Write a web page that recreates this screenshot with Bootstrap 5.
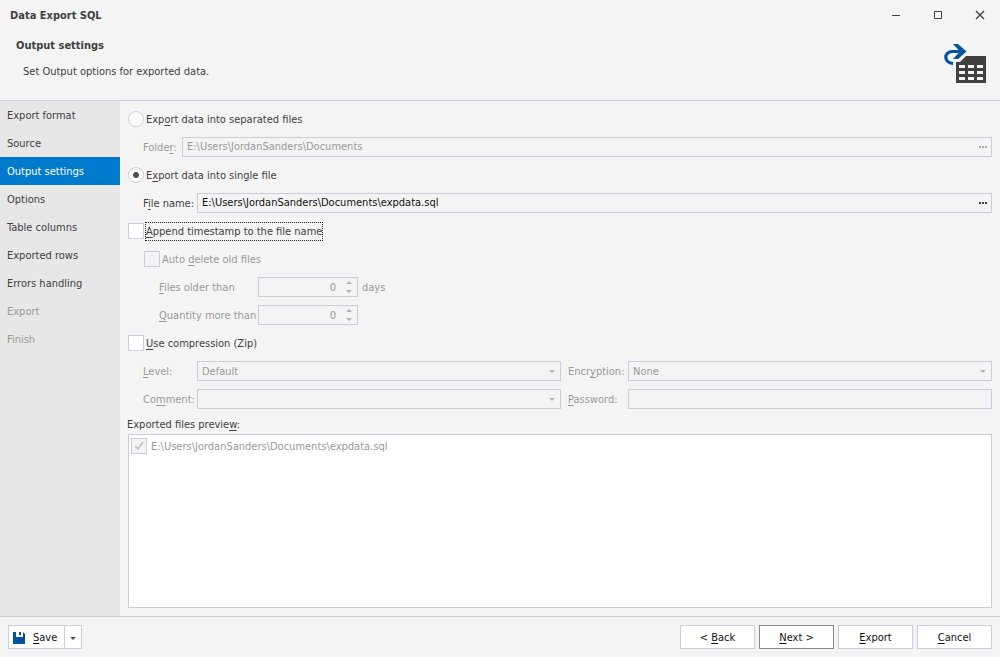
<!DOCTYPE html>
<html lang="en">
<head>
<meta charset="utf-8">
<meta name="viewport" content="width=device-width, initial-scale=1">
<title>Data Export SQL</title>
<link href="https://cdn.jsdelivr.net/npm/bootstrap@5.3.0/dist/css/bootstrap.min.css" rel="stylesheet">
<style>
  :root { --line: #cccce0; --ink: #404040; --dim: #999; --accent: #007acc; --face: #f4f4f4; }
  body {
    font: 11px/16px "DejaVu Sans Condensed", Tahoma, sans-serif;
    color: var(--ink); background: var(--face);
  }
  u { text-decoration-skip-ink: none; text-underline-offset: 2px; text-decoration-thickness: 1px; }
  h1, h2 { font-size: 11px; line-height: 16px; font-weight: 700; margin: 0; }
  h1, label, .unit { padding-top: 2px; }
  p { margin: 0; }

  .titlebar { height: 30px; padding-left: 10px; }
  .win-btn { width: 42px; height: 30px; border: 0; background: none; padding: 0; color: var(--ink); }
  .win-btn svg { display: block; margin: auto; }
  .heading { height: 70px; padding: 8px 14px 0 16px; }
  .heading p { padding: 10px 0 0 7px; }
  .line-bottom { border-bottom: 1px solid var(--line); box-sizing: content-box; }

  .steps { width: 120px; background: #e7e7e7; }
  .steps a { height: 28px; padding: 0 7px; line-height: 30px; color: var(--ink); border-radius: 0; }
  .steps a.active { background: var(--accent); color: #fff; }
  .steps a.disabled { color: var(--dim); }

  .settings { padding: 4px 8px 8px; }
  .line-row { min-height: 28px; }
  .indent-1 { padding-left: 15px; }
  .indent-tick { padding-left: 16px; }
  .indent-2 { padding-left: 31px; }
  .off { color: var(--dim); }
  .cap-s { width: 39px; }
  .cap-m { width: 54px; }
  .cap-l { width: 99px; }
  .pair { display: grid; grid-template-columns: 54px 1fr 67px 1fr; }
  .cap-e { padding-left: 7px; }

  .tick {
    appearance: none; flex: none; width: 16px; height: 16px; margin: 0;
    border: 1px solid var(--line); background: #fff center no-repeat;
  }
  .tick[type=radio] { border-radius: 50%; }
  .tick[type=radio]:checked { background-image: radial-gradient(circle, #505050 2.5px, transparent 3.5px); }
  .tick:disabled { background-color: var(--face); }
  .tick[type=checkbox]:checked {
    background-image: url("data:image/svg+xml,%3Csvg xmlns='http://www.w3.org/2000/svg' width='14' height='14'%3E%3Cpath d='M3 7l3 3 5-7' fill='none' stroke='%23bbb' stroke-width='1.3'/%3E%3C/svg%3E");
  }
  .tick-text { margin-left: 2px; }
  .focus-box { outline: 1px dotted #222; padding: 1px 0 0; }

  .field {
    height: 20px; min-width: 0; width: 100%; border: 1px solid var(--line); border-radius: 0;
    background: var(--face); color: #111; padding: 0 4px; font: inherit; outline: 0;
  }
  .field:disabled, .field.off { color: var(--dim); opacity: 1; }
  select.field, input.field, .field input { padding-top: 1px; }
  .field input { border: 0; background: none; padding-left: 0; color: inherit; min-width: 0; outline: 0; }
  .more { width: 17px; border: 0; background: none; padding: 0 0 0 5px; margin-right: -4px; line-height: 0; color: #404040; text-align: left; }
  .off .more { color: #aaa; }
  .more svg { display: block; }
  select.field {
    appearance: none; background: var(--face) right 5px center no-repeat
    url("data:image/svg+xml,%3Csvg xmlns='http://www.w3.org/2000/svg' width='6' height='3'%3E%3Cpath d='M0 0h6L3 3z' fill='%23b4b4b4'/%3E%3C/svg%3E");
  }
  input.spin {
    width: 100px; padding-right: 21px; text-align: right; appearance: textfield;
    background: var(--face) right 5px center no-repeat
    url("data:image/svg+xml,%3Csvg xmlns='http://www.w3.org/2000/svg' width='6' height='12'%3E%3Cpath d='M0 3h6L3 0zM0 9h6L3 12z' fill='%23b4b4b4'/%3E%3C/svg%3E");
  }
  .spin::-webkit-inner-spin-button { appearance: none; margin: 0; }
  .preview-cap { height: 21px; line-height: 23px; margin-left: -1px; }
  .preview { border: 1px solid var(--line); background: #fff; padding: 2px; }

  .actions { border-top: 1px solid var(--line); padding: 8px; }
  .actions .btn {
    --bs-btn-font-size: 11px; --bs-btn-line-height: 16px; --bs-btn-padding-y: 3px; --bs-btn-padding-x: 0;
    --bs-btn-border-radius: 0; --bs-btn-border-color: var(--line); --bs-btn-bg: #fff; --bs-btn-color: #111;
    width: 75px; height: 24px; padding-top: 4px; padding-bottom: 2px;
  }
  .actions .btn.main-btn { border-color: #888; }
  .actions .save-btn { width: 57px; padding-left: 4px; padding-right: 4px; }
  .actions .save-menu { width: 18px; }
</style>
</head>
<body class="d-flex flex-column min-vh-100">
  <header class="line-bottom">
    <div class="titlebar d-flex align-items-center">
      <h1 class="me-auto">Data Export SQL</h1>
      <button class="win-btn" type="button" aria-label="Minimize"><svg width="12" height="10"><path d="M3 5.500h8" stroke="currentColor"/></svg></button>
      <button class="win-btn" type="button" aria-label="Maximize"><svg width="12" height="10"><path d="M3.500 1.500h7v7h-7z" fill="none" stroke="currentColor"/></svg></button>
      <button class="win-btn" type="button" aria-label="Close"><svg width="12" height="10"><path d="M3 1l8 8M11 1l-8 8" stroke="currentColor" stroke-width="1.400"/></svg></button>
    </div>
    <div class="heading d-flex justify-content-between">
      <div>
        <h2>Output settings</h2>
        <p>Set Output options for exported data.</p>
      </div>
      <svg width="42" height="46" viewBox="0 -6 42 46" aria-hidden="true">
        <path fill="#00539c" d="M9 0h5l8.500 7.500L14 15H9l7-7.500z"/>
        <path fill="none" stroke="#00539c" stroke-width="3.200" d="M18 7.500H8.500c-9 0-9 11.500 .5 12"/>
        <path fill="#404040" fill-rule="evenodd" d="M22 12h20v27H12V18h4zM15 21v3h6v-3zM24 21v3h6v-3zM33 21v3h6v-3zM15 27v3h6v-3zM24 27v3h6v-3zM33 27v3h6v-3zM15 33v3h6v-3zM24 33v3h6v-3zM33 33v3h6v-3z"/>
      </svg>
    </div>
  </header>

  <div class="d-flex flex-grow-1">
    <nav class="steps nav flex-column flex-nowrap flex-shrink-0" aria-label="Steps">
      <a class="nav-link" href="#">Export format</a>
      <a class="nav-link" href="#">Source</a>
      <a class="nav-link active" href="#" aria-current="step">Output settings</a>
      <a class="nav-link" href="#">Options</a>
      <a class="nav-link" href="#">Table columns</a>
      <a class="nav-link" href="#">Exported rows</a>
      <a class="nav-link" href="#">Errors handling</a>
      <a class="nav-link disabled" href="#" aria-disabled="true">Export</a>
      <a class="nav-link disabled" href="#" aria-disabled="true">Finish</a>
    </nav>

    <main class="settings d-flex flex-column flex-grow-1">
      <div class="line-row d-flex align-items-center">
        <input class="tick" type="radio" name="target" id="separate">
        <label class="tick-text" for="separate">Exp<u>o</u>rt data into separated files</label>
      </div>
      <div class="line-row d-flex align-items-center indent-1 off">
        <label class="cap-s flex-shrink-0" for="folder">Folde<u>r</u>:</label>
        <div class="field off d-flex align-items-center">
          <input class="flex-grow-1" id="folder" type="text" value="E:\Users\JordanSanders\Documents" disabled>
          <button class="more" type="button" aria-label="Browse folder" disabled><svg width="8" height="2"><path d="M0 1h2M3 1h2M6 1h2" stroke="currentColor" stroke-width="2"/></svg></button>
        </div>
      </div>
      <div class="line-row d-flex align-items-center">
        <input class="tick" type="radio" name="target" id="single" checked>
        <label class="tick-text" for="single">E<u>x</u>port data into single file</label>
      </div>
      <div class="line-row d-flex align-items-center indent-1">
        <label class="cap-m flex-shrink-0" for="file">F<u>i</u>le name:</label>
        <div class="field d-flex align-items-center">
          <input class="flex-grow-1" id="file" type="text" value="E:\Users\JordanSanders\Documents\expdata.sql">
          <button class="more" type="button" aria-label="Browse file"><svg width="8" height="2"><path d="M0 1h2M3 1h2M6 1h2" stroke="currentColor" stroke-width="2"/></svg></button>
        </div>
      </div>
      <div class="line-row d-flex align-items-center">
        <input class="tick" type="checkbox" id="stamp">
        <label class="tick-text focus-box" for="stamp"><u>A</u>ppend timestamp to the file name</label>
      </div>
      <div class="line-row d-flex align-items-center indent-tick off">
        <input class="tick" type="checkbox" id="autodel" disabled>
        <label class="tick-text" for="autodel">Auto <u>d</u>elete old files</label>
      </div>
      <div class="line-row d-flex align-items-center indent-2 off">
        <label class="cap-l" for="older"><u>F</u>iles older than</label>
        <input class="field spin" type="number" id="older" value="0" disabled>
        <span class="unit ms-1">days</span>
      </div>
      <div class="line-row d-flex align-items-center indent-2 off">
        <label class="cap-l text-nowrap" for="quantity"><u>Q</u>uantity more than</label>
        <input class="field spin" type="number" id="quantity" value="0" disabled>
      </div>
      <div class="line-row d-flex align-items-center">
        <input class="tick" type="checkbox" id="zip">
        <label class="tick-text" for="zip"><u>U</u>se compression (Zip)</label>
      </div>
      <div class="line-row pair align-items-center indent-1 off">
        <label for="level"><u>L</u>evel:</label>
        <select class="field" id="level" disabled><option>Default</option></select>
        <label class="cap-e" for="encryption">Encr<u>y</u>ption:</label>
        <select class="field" id="encryption" disabled><option>None</option></select>
      </div>
      <div class="line-row pair align-items-center indent-1 off">
        <label for="comment">Co<u>m</u>ment:</label>
        <select class="field" id="comment" disabled><option></option></select>
        <label class="cap-e" for="password"><u>P</u>assword:</label>
        <input class="field" type="password" id="password" disabled>
      </div>
      <div class="preview-cap" id="preview-cap">Exported files previe<u>w</u>:</div>
      <div class="preview flex-grow-1" role="group" aria-labelledby="preview-cap">
        <div class="d-flex align-items-center off">
          <input class="tick" type="checkbox" id="out1" checked disabled>
          <label class="ms-1" for="out1">E:\Users\JordanSanders\Documents\expdata.sql</label>
        </div>
      </div>
    </main>
  </div>

  <footer class="actions d-flex align-items-center gap-1">
    <div class="btn-group me-auto">
      <button class="btn save-btn d-flex align-items-center gap-2" type="button">
        <svg width="12" height="12" aria-hidden="true"><path fill="#00539c" fill-rule="evenodd" d="M0 0h1v5h9V0l2 2v10H0zM1 0h2v5H1zM6 0h2v3H6z"/></svg>
        <span><u>S</u>ave</span>
      </button>
      <button class="btn save-menu" type="button" aria-label="Save options"><svg class="d-block m-auto" width="6" height="3"><path d="M0 0h6L3 3z" fill="#505050"/></svg></button>
    </div>
    <button class="btn" type="button">&lt; <u>B</u>ack</button>
    <button class="btn main-btn" type="button"><u>N</u>ext &gt;</button>
    <button class="btn" type="button"><u>E</u>xport</button>
    <button class="btn" type="button"><u>C</u>ancel</button>
  </footer>
<script src="https://cdn.jsdelivr.net/npm/bootstrap@5.3.0/dist/js/bootstrap.bundle.min.js"></script>
</body>
</html>
